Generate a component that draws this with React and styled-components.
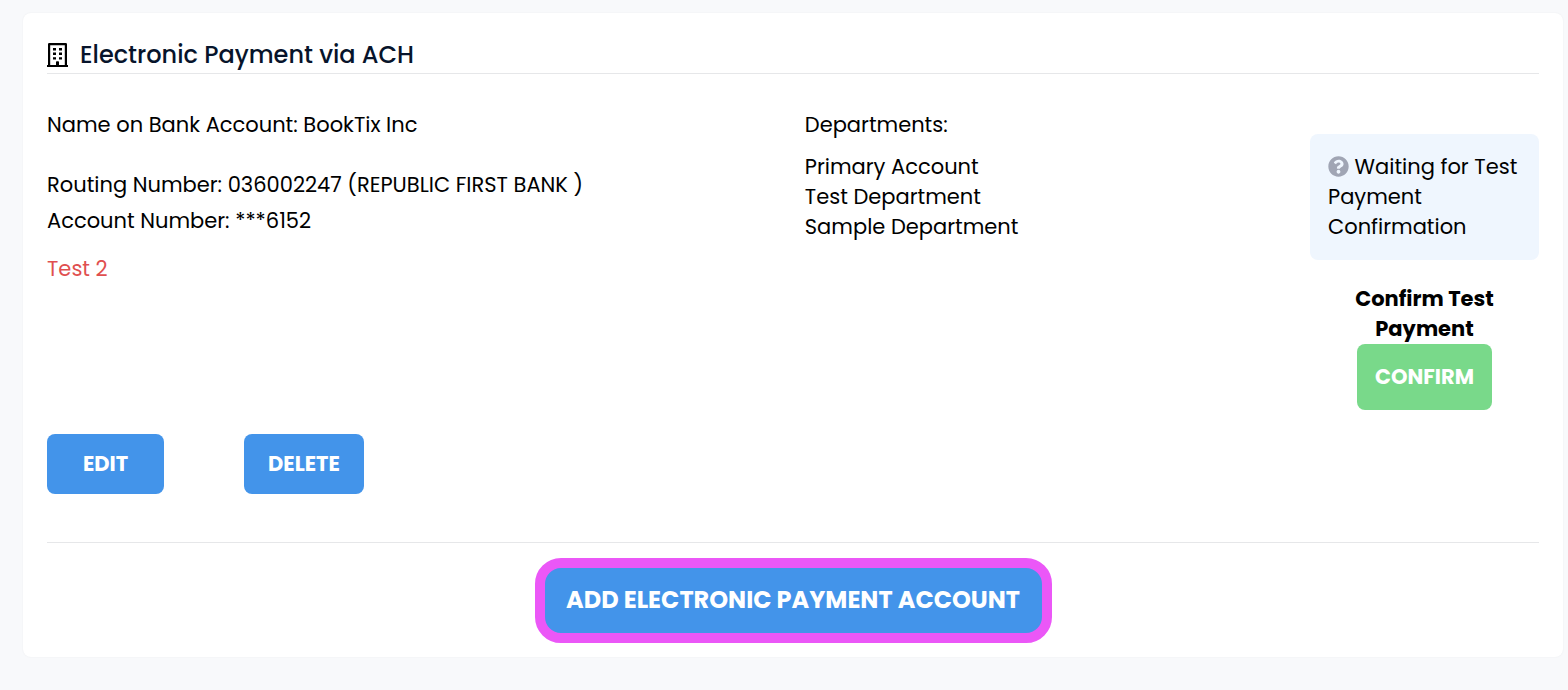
import styled, { createGlobalStyle } from "styled-components";
import { FaQuestionCircle } from "react-icons/fa";

const departments = ["Primary Account", "Test Department", "Sample Department"];

const BuildingIcon = () => (
  <svg width="21" height="24" viewBox="0 0 21 24" aria-hidden="true">
    <path
      fill="#000"
      fillRule="evenodd"
      d="M2.2 0h16.6q1.2 0 1.2 1.2V22h1v2H0v-2h1V1.2Q1 0 2.2 0zM3.2 2.2V22h5.8v-3q0-.8.8-.8h1.4q.8 0 .8.8v3h5.8V2.2z"
    />
    <path
      fill="#000"
      d="M6 5h3v2.4H6zM12 5h3v2.4h-3zM6 9.6h3V12H6zM12 9.6h3V12h-3zM6 14.2h3v2.4H6zM12 14.2h3v2.4h-3z"
    />
  </svg>
);

const App = () => {
  return (
    <>
      <GlobalStyle />
      <Page>
        <Card>
          <CardHeader>
            <BuildingIcon />
            <h2>Electronic Payment via ACH</h2>
          </CardHeader>
          <Account>
            <BankInfo>
              <p className="name">Name on Bank Account: BookTix Inc</p>
              <p>Routing Number: 036002247 (REPUBLIC FIRST BANK )</p>
              <p>Account Number: ***6152</p>
              <p className="note">Test 2</p>
            </BankInfo>
            <Departments>
              <h3>Departments:</h3>
              <ul>
                {departments.map((name) => (
                  <li key={name}>{name}</li>
                ))}
              </ul>
            </Departments>
            <Status>
              <Notice>
                <FaQuestionCircle /> Waiting for Test Payment Confirmation
              </Notice>
              <ConfirmLabel>Confirm Test Payment</ConfirmLabel>
              <ConfirmButton type="button">CONFIRM</ConfirmButton>
            </Status>
          </Account>
          <Actions>
            <Button type="button">EDIT</Button>
            <Button type="button">DELETE</Button>
          </Actions>
          <CardFooter>
            <AddButton type="button">ADD ELECTRONIC PAYMENT ACCOUNT</AddButton>
          </CardFooter>
        </Card>
      </Page>
    </>
  );
};

export default App;

const GlobalStyle = createGlobalStyle`
  * {
    box-sizing: border-box;
  }
  body {
    margin: 0;
    background-color: #f8f9fb;
    color: #000;
    font-family: Poppins, Inter, sans-serif;
    font-size: 21px;
    line-height: 30px;
  }
  h2, h3, p, ul {
    margin: 0;
    padding: 0;
  }
`;

const Page = styled.main`
  padding: 13px 5px 33px 23px;
`;

const Card = styled.section`
  background-color: #fff;
  border-radius: 8px;
  padding: 24px 24px 14px;
  box-shadow: 0 0 2px rgba(0, 0, 0, 0.06);
`;

const CardHeader = styled.header`
  display: flex;
  align-items: center;
  gap: 12px;
  padding-bottom: 1px;
  border-bottom: 1px solid #e6e7e9;
  h2 {
    color: #07142b;
    font-size: 24px;
    font-weight: 500;
    line-height: 35px;
  }
`;

const Account = styled.div`
  display: grid;
  grid-template-columns: 3fr 2fr 229px;
  padding-top: 36px;
`;

const BankInfo = styled.div`
  p {
    line-height: 36px;
  }
  .name {
    line-height: 30px;
    margin-bottom: 27px;
  }
  .note {
    color: #e04f4f;
    margin-top: 12px;
  }
`;

const Departments = styled.div`
  h3 {
    font-size: 21px;
    font-weight: 400;
    margin-bottom: 12px;
  }
  ul {
    list-style: none;
  }
`;

const Status = styled.div`
  display: flex;
  flex-direction: column;
  align-items: center;
  padding-top: 24px;
`;

const Notice = styled.p`
  width: 100%;
  padding: 18px;
  border-radius: 8px;
  background-color: #eff6fe;
  svg {
    width: 21px;
    height: 21px;
    color: #a0a5b4;
    vertical-align: -3px;
  }
`;

const ConfirmLabel = styled.strong`
  width: 160px;
  margin-top: 24px;
  font-weight: 700;
  text-align: center;
`;

const Button = styled.button`
  min-width: 117px;
  height: 60px;
  padding: 0 24px 2px;
  border: none;
  border-radius: 8px;
  background-color: #4394ea;
  color: #fff;
  font-family: inherit;
  font-size: 21px;
  font-weight: 700;
  cursor: pointer;
`;

const ConfirmButton = styled(Button)`
  min-width: 135px;
  height: 66px;
  padding: 0 18px 2px;
  background-color: #79d98a;
`;

const Actions = styled.div`
  display: flex;
  gap: 80px;
  padding: 24px 0 48px;
`;

const CardFooter = styled.footer`
  display: flex;
  justify-content: center;
  padding-top: 15px;
  border-top: 1px solid #e6e7e9;
`;

const AddButton = styled(Button)`
  min-width: 517px;
  height: 85px;
  padding: 0 20px 2px;
  border: 10px solid #eb57f7;
  border-radius: 26px;
  font-size: 24px;
`;
